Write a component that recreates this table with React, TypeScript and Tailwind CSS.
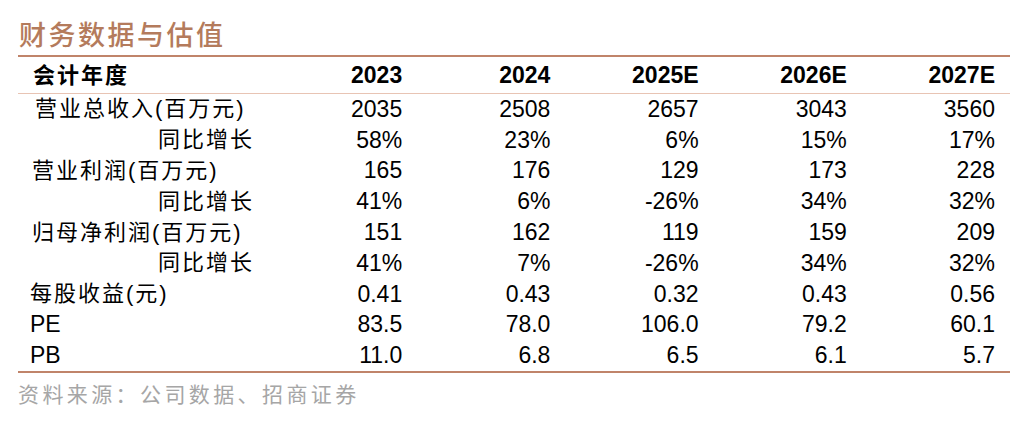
const COLS = ["2023", "2024", "2025E", "2026E", "2027E"];

type Row = {
  label: string;
  indent: string;
  latin?: boolean;
  values: string[];
};

// 同比增长 行缩进到右侧
const ROWS: Row[] = [
  { label: "营业总收入(百万元)", indent: "pl-[17px]", values: ["2035", "2508", "2657", "3043", "3560"] },
  { label: "同比增长", indent: "pl-[140px]", values: ["58%", "23%", "6%", "15%", "17%"] },
  { label: "营业利润(百万元)", indent: "pl-[14px]", values: ["165", "176", "129", "173", "228"] },
  { label: "同比增长", indent: "pl-[140px]", values: ["41%", "6%", "-26%", "34%", "32%"] },
  { label: "归母净利润(百万元)", indent: "pl-[14px]", values: ["151", "162", "119", "159", "209"] },
  { label: "同比增长", indent: "pl-[140px]", values: ["41%", "7%", "-26%", "34%", "32%"] },
  { label: "每股收益(元)", indent: "pl-[12px]", values: ["0.41", "0.43", "0.32", "0.43", "0.56"] },
  { label: "PE", indent: "pl-[12px]", latin: true, values: ["83.5", "78.0", "106.0", "79.2", "60.1"] },
  { label: "PB", indent: "pl-[12px]", latin: true, values: ["11.0", "6.8", "6.5", "6.1", "5.7"] },
];

const font = "font-['Liberation_Sans','Noto_Sans_CJK_SC',sans-serif]";

export default function App() {
  return (
    <div className={`w-[1022px] h-[421px] bg-white ${font} text-black`}>
      <div className="ml-[18px] w-[992px]">
        {/* 标题 */}
        <div className="h-[55px] pt-[20px] pl-[1px]">
          <h1 className="text-[27px] leading-[27px] font-medium tracking-[2.5px] text-[#b47b5c] font-['Noto_Sans_CJK_SC',sans-serif]">
            财务数据与估值
          </h1>
        </div>

        {/* 表格 */}
        <div className="border-t-2 border-b-2 border-[#c0846a]">
          <div className="grid grid-cols-[251px_repeat(5,1fr)] h-[37px] items-center border-b border-[#e8c4b4]">
            <div className="pl-[15px] text-[22px] font-bold tracking-[2px]">会计年度</div>
            {COLS.map((c) => (
              <div key={c} className="pr-[15px] text-right text-[23px] font-bold">
                {c}
              </div>
            ))}
          </div>
          {ROWS.map((row, i) => (
            <div key={i} className="grid grid-cols-[251px_repeat(5,1fr)] h-[30.8px] items-center">
              <div
                className={
                  row.latin
                    ? `${row.indent} text-[23px] leading-none`
                    : `${row.indent} text-[22px] tracking-[2px] leading-none whitespace-nowrap`
                }
              >
                {row.label}
              </div>
              {row.values.map((v, j) => (
                <div key={j} className="pr-[15px] text-right text-[23px] leading-none">
                  {v}
                </div>
              ))}
            </div>
          ))}
        </div>

        {/* 来源 */}
        <div className="mt-[8px] text-[21px] leading-[24px] tracking-[3.4px] text-[#a6a6a6] font-['Noto_Sans_CJK_SC',sans-serif]">
          资料来源：公司数据、招商证券
        </div>
      </div>
    </div>
  );
}
